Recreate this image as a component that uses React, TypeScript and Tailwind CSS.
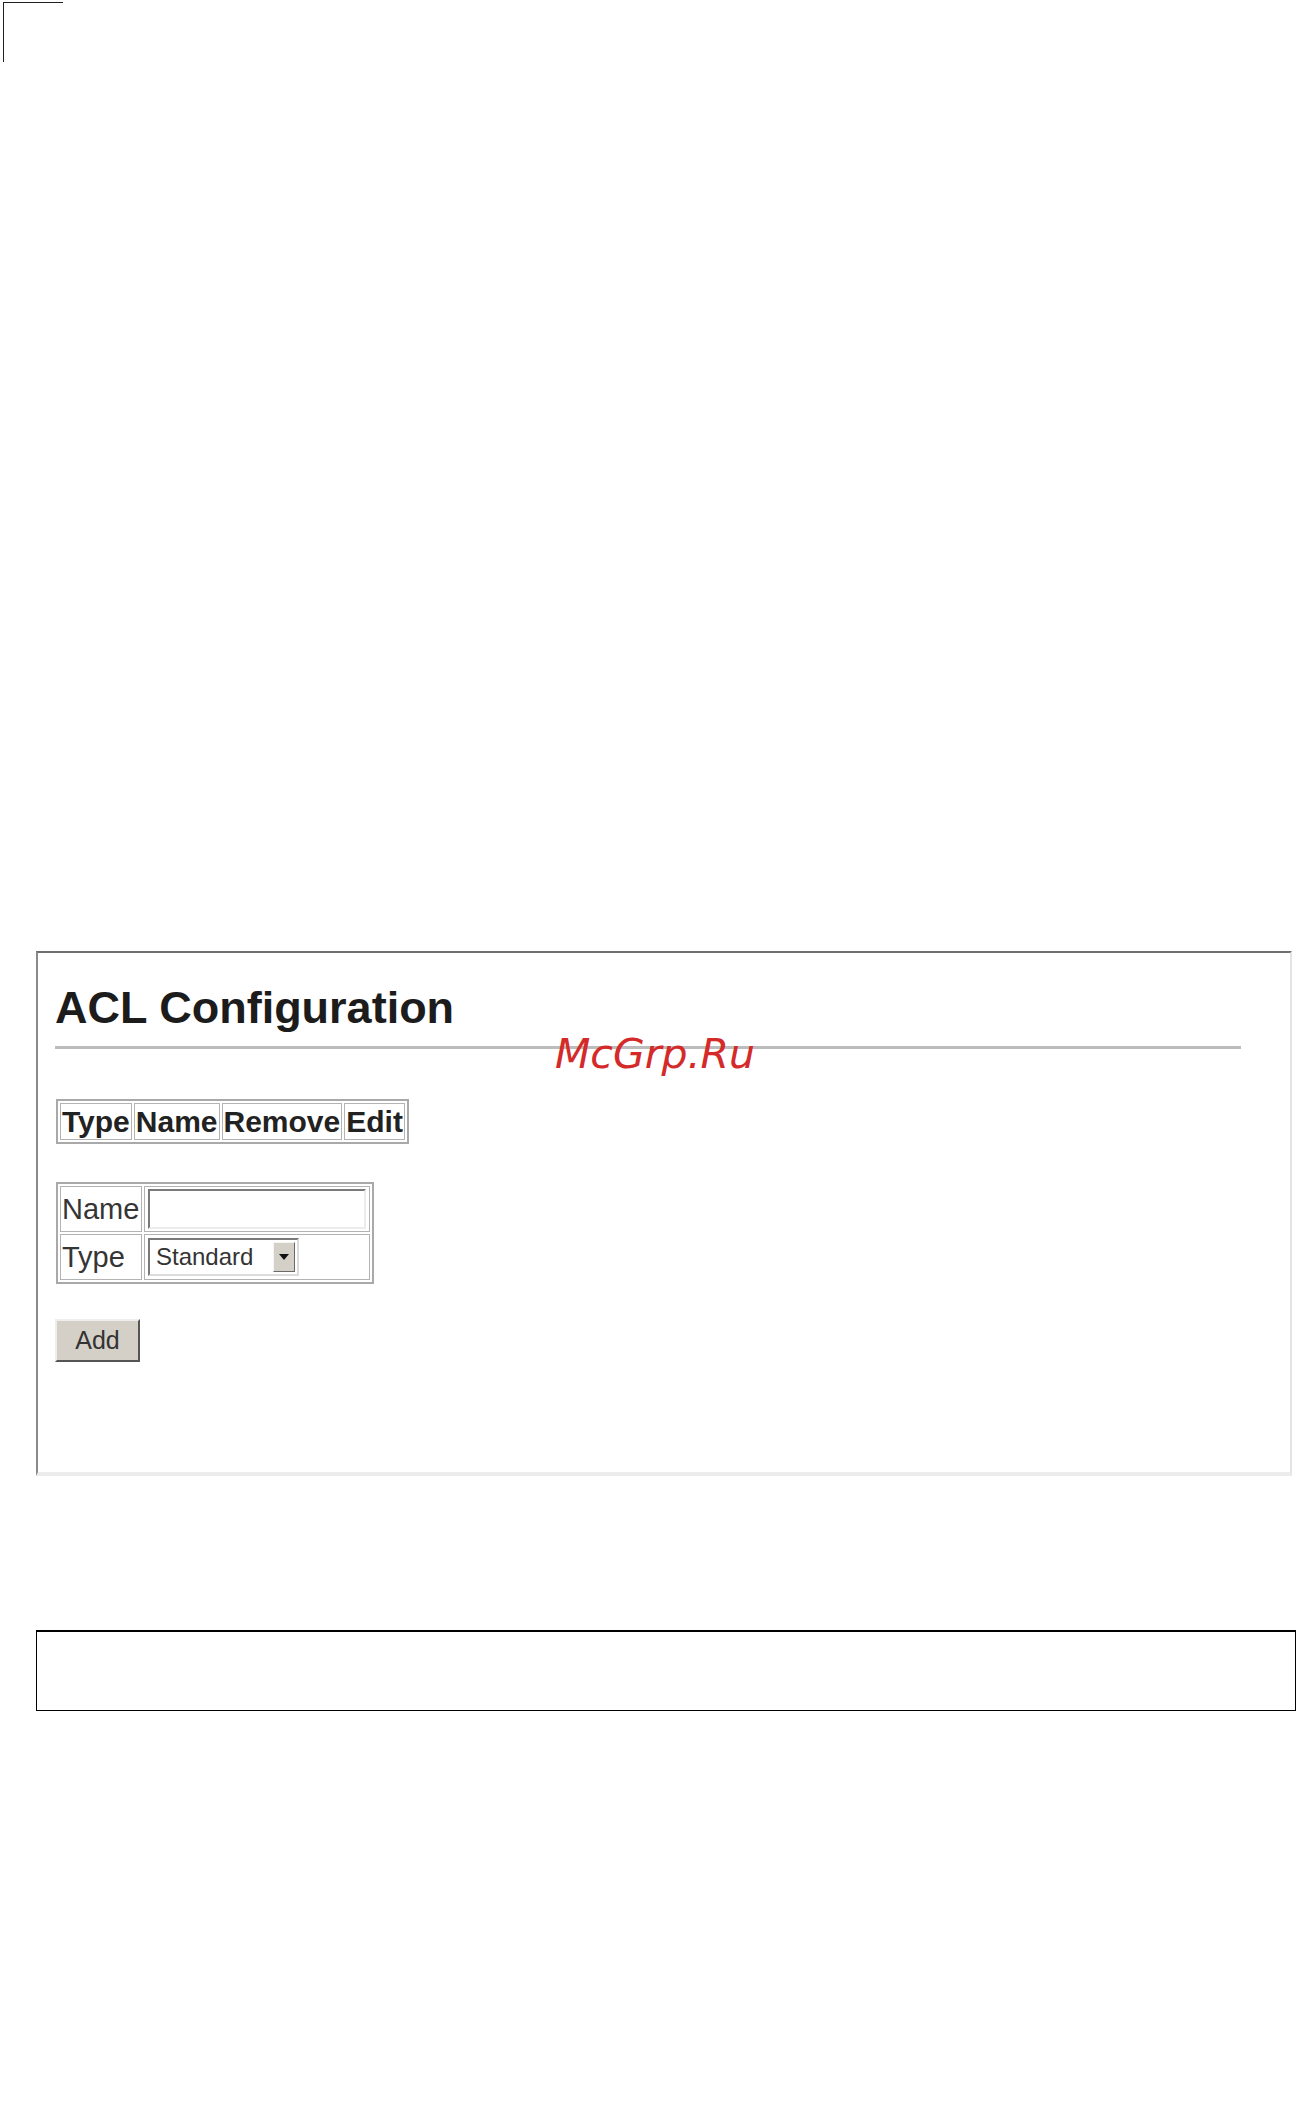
export default function App() {
  const headers = ["Type", "Name", "Remove", "Edit"];

  return (
    <div className="relative w-full h-[2107px] bg-white overflow-hidden" style={{ fontFamily: '"Liberation Sans", Arial, sans-serif' }}>
      {/* crop mark */}
      <div className="ml-[3px] mt-[2px] w-[60px] h-[60px] border-l border-t border-[#231f20]" />

      {/* ACL panel */}
      <div className="ml-[36px] mt-[889px] w-[1256px] h-[525px] border-t-2 border-l-2 border-r-2 border-b-4 border-t-[#6e6e6e] border-l-[#8a8a8a] border-r-[#e4e4e4] border-b-[#ececec] pl-[17px]">
        <h1 className="mt-[33px] text-[45px] leading-[44px] font-bold text-[#1c1c1c]">ACL Configuration</h1>
        <div className="mt-[16px] w-[1186px] h-[3px] bg-[#bcbcbc]" />

        <table className="mt-[50px] ml-[1px] border-2 border-[#a9a9a9] border-separate border-spacing-[2px]">
          <thead>
            <tr>
              {headers.map((h) => (
                <th key={h} className="border border-[#b3b3b3] px-[1px] py-0 text-[30px] leading-[35px] font-bold text-[#222] text-left">
                  {h}
                </th>
              ))}
            </tr>
          </thead>
        </table>

        <table className="mt-[38px] ml-[1px] border-2 border-[#a9a9a9] border-separate border-spacing-[2px] text-[29px] text-[#353535]">
          <tbody>
            <tr>
              <td className="w-[82px] border border-[#b3b3b3] px-[1px] leading-[44px]">Name</td>
              <td className="border border-[#b3b3b3] px-[3px] py-[2px]">
                <div className="w-[218px] h-[40px] bg-white border-2 border-t-[#7a7a7a] border-l-[#7a7a7a] border-r-[#ececec] border-b-[#ececec]" />
              </td>
            </tr>
            <tr>
              <td className="border border-[#b3b3b3] px-[1px] leading-[44px]">Type</td>
              <td className="border border-[#b3b3b3] px-[3px] py-[2px]">
                <div className="flex items-center w-[151px] h-[38px] bg-white border-2 border-t-[#7a7a7a] border-l-[#7a7a7a] border-r-[#dcdcdc] border-b-[#dcdcdc] pl-[6px] pr-[2px]">
                  <span className="flex-1 text-[24px] leading-none text-[#333]">Standard</span>
                  <span className="flex items-center justify-center w-[22px] h-[30px] bg-[#d4d0c8] border border-t-[#f4f4f4] border-l-[#f4f4f4] border-r-[#6a6a6a] border-b-[#6a6a6a]">
                    <svg width="10" height="6" viewBox="0 0 10 6">
                      <path d="M0 0 L10 0 L5 6 Z" fill="#111" />
                    </svg>
                  </span>
                </div>
              </td>
            </tr>
          </tbody>
        </table>

        <button className="mt-[35px] ml-[0px] w-[85px] h-[43px] bg-[#d4d0c8] border-2 border-t-[#eeeeee] border-l-[#eeeeee] border-r-[#555] border-b-[#555] text-[25px] leading-none text-[#333]">
          Add
        </button>
      </div>

      {/* empty boxed area */}
      <div className="ml-[36px] mt-[154px] w-[1260px] h-[81px] border border-t-2 border-black" />

      {/* watermark */}
      <div className="absolute left-[555px] top-[1034px] text-[41px] leading-none italic text-[#d42a2a]" style={{ fontFamily: '"DejaVu Sans", sans-serif' }}>
        McGrp.Ru
      </div>
    </div>
  );
}
